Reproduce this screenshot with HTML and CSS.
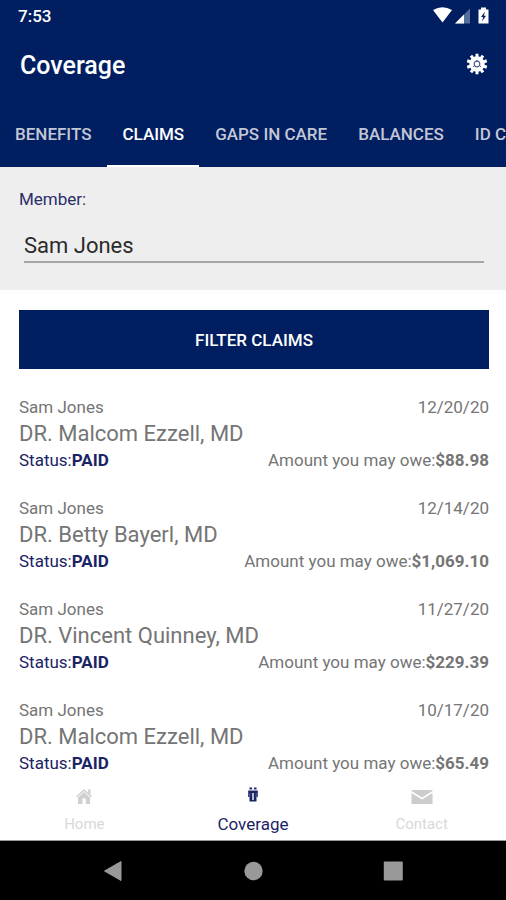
FILE: index.html
```html
<!DOCTYPE html>
<html lang="en">
<head>
<meta charset="utf-8">
<meta name="viewport" content="width=device-width, initial-scale=1">
<title>Coverage</title>
<link rel="stylesheet" href="styles.css">
</head>
<body>
<div class="app">
  <header class="top">
    <div class="status">
      <span>7:53</span>
      <svg class="status-icons" width="56" height="18" viewBox="0 0 56 18" aria-hidden="true">
        <path fill="#fff" d="M0 3Q9.500-2.500 19 3L9.500 15.500z"/>
        <path fill="#52709a" d="M22 16.500L37 1.500V16.500z"/>
        <path fill="#fff" d="M22 16.500L31 7.500V16.500z"/>
        <path fill="#fff" d="M45.500 2.500H48V0.500H53V2.500H55.500V16.500H45.500z"/>
        <path fill="#001e60" d="M52 4.500L48 10H50.200L49 14.500L53 8.700H50.800z"/>
      </svg>
    </div>
    <div class="bar">
      <h1>Coverage</h1>
      <button class="settings" type="button" aria-label="Settings">
        <svg width="22" height="22" viewBox="-11 -11 22 22" aria-hidden="true">
          <g stroke="#fff" stroke-width="3">
            <path d="M0-10.300V10.300M-6-8.300L6 8.300M-9.800-3.200L9.800 3.200M-9.800 3.200L9.800-3.200M-6 8.300L6-8.300"/>
          </g>
          <circle r="7.700" fill="#fff"/>
          <circle r="2.800" fill="none" stroke="#4b5b8c" stroke-width="1.200"/>
          <path d="M-4 3L-2 1M4 3L2 1M0-4V-2" stroke="#4b5b8c"/>
        </svg>
      </button>
    </div>
    <nav class="tabs" aria-label="Coverage sections">
      <a href="#benefits">BENEFITS</a>
      <a href="#claims" class="active" aria-current="page">CLAIMS</a>
      <a href="#gaps">GAPS IN CARE</a>
      <a href="#balances">BALANCES</a>
      <a href="#cards">ID CARDS</a>
    </nav>
  </header>

  <section class="member">
    <label for="member">Member:</label>
    <select id="member"><option>Sam Jones</option></select>
  </section>

  <main class="claims">
    <button class="filter" type="button">FILTER CLAIMS</button>
    <article class="claim">
      <div class="row"><span>Sam Jones</span><span>12/20/20</span></div>
      <h2>DR. Malcom Ezzell, MD</h2>
      <div class="row"><span class="paid">Status:<b>PAID</b></span><span>Amount you may owe:<b>$88.98</b></span></div>
    </article>
    <article class="claim">
      <div class="row"><span>Sam Jones</span><span>12/14/20</span></div>
      <h2>DR. Betty Bayerl, MD</h2>
      <div class="row"><span class="paid">Status:<b>PAID</b></span><span>Amount you may owe:<b>$1,069.10</b></span></div>
    </article>
    <article class="claim">
      <div class="row"><span>Sam Jones</span><span>11/27/20</span></div>
      <h2>DR. Vincent Quinney, MD</h2>
      <div class="row"><span class="paid">Status:<b>PAID</b></span><span>Amount you may owe:<b>$229.39</b></span></div>
    </article>
    <article class="claim">
      <div class="row"><span>Sam Jones</span><span>10/17/20</span></div>
      <h2>DR. Malcom Ezzell, MD</h2>
      <div class="row"><span class="paid">Status:<b>PAID</b></span><span>Amount you may owe:<b>$65.49</b></span></div>
    </article>
  </main>

  <nav class="bottom" aria-label="Main">
    <a href="#home">
      <svg width="22" height="20" viewBox="0 0 22 20" aria-hidden="true">
        <path d="M3.500 11L11 4L18.500 11" fill="none" stroke="#d0d0d0" stroke-width="1.500"/>
        <path fill="#d0d0d0" d="M15 3.500H17.500V9L15 6.500zM5 11.500L11 6L17 11.500V18H12.800V12.500H9.500V18H5z"/>
      </svg>
      <span>Home</span>
    </a>
    <a href="#coverage" class="active" aria-current="page">
      <svg width="22" height="20" viewBox="0 0 22 20" aria-hidden="true">
        <path fill="#1a2364" d="M7.500 1.500H10V3.500H7.500zM12 1.500H14.500V3.500H12zM6.200 4.500H15.800V11H14.500V15.500H7.500V11H6.200z"/>
        <path fill="#b9bdd6" d="M10 7H12V14H10zM7.500 3.500H14.500V4.300H7.500z"/>
        <path stroke="#8d94bb" stroke-width=".6" d="M7.800 7V11M14.200 7V11"/>
      </svg>
      <span>Coverage</span>
    </a>
    <a href="#contact">
      <svg width="22" height="20" viewBox="0 0 22 20" aria-hidden="true">
        <path fill="#ccc" d="M0.500 4H21.500V5L11 11.500L0.500 5zM0.500 7L11 13.500L21.500 7V18H0.500z"/>
      </svg>
      <span>Contact</span>
    </a>
  </nav>

  <div class="system">
    <button type="button" aria-label="Back"><svg width="20" height="22" viewBox="0 0 20 22"><path fill="#999" stroke="#999" stroke-linejoin="round" d="M1.500 11L18 1.500V20.500z"/></svg></button>
    <button type="button" aria-label="Home screen"><svg width="20" height="20" viewBox="0 0 20 20"><circle cx="10.500" cy="10" r="9.200" fill="#999"/></svg></button>
    <button type="button" aria-label="Recent apps"><svg width="20" height="20" viewBox="0 0 20 20"><rect width="19" height="19" x=".8" y=".5" rx="1" fill="#999"/></svg></button>
  </div>
</div>
</body>
</html>
```
FILE: styles.css
```css
* { box-sizing: border-box; }
body {
  margin: 0;
  background: #fff;
  color: #757575;
  font: 17px/24px Roboto, "Liberation Sans", sans-serif;
}
h1, h2 { margin: 0; }
button { border: 0; padding: 0; font: inherit; }
a { color: inherit; text-decoration: none; }
svg { display: block; }

.app {
  display: flex;
  flex-direction: column;
  height: 100vh;
}

.top { background: #001e60; color: #fff; }
.status {
  display: flex;
  justify-content: space-between;
  align-items: center;
  height: 32px;
  padding: 0 17px 0 18px;
  font-weight: 500;
}
.bar {
  display: flex;
  justify-content: space-between;
  align-items: center;
  height: 68px;
  padding: 0 18px 4px 20px;
}
h1 { padding-top: 4px; font-size: 25px; font-weight: 500; line-height: 32px; }
.settings { background: none; }
.tabs {
  display: flex;
  gap: 1px;
  height: 67px;
  overflow: hidden;
  font-weight: 500;
  white-space: nowrap;
  color: #c3c7d5;
}
.tabs a {
  flex: none;
  padding: 22px 15px 0;
  border-bottom: 2px solid transparent;
}
.tabs .active { color: #fff; border-color: #fff; }

.member {
  display: flex;
  flex-direction: column;
  gap: 16px;
  padding: 20px 22px 27px 19px;
  background: #eee;
}
.member label { color: #2b2f69; }
.member select {
  appearance: none;
  height: 36px;
  margin-left: 5px;
  padding: 4px 0 0;
  border: 0;
  border-bottom: 2px solid #a5a5a5;
  border-radius: 0;
  background: none;
  color: #2b2b2b;
  font: 22px/30px Roboto, "Liberation Sans", sans-serif;
}

.claims {
  flex: 1;
  min-height: 0;
  overflow: hidden;
  padding: 20px 17px 0 19px;
}
.filter {
  display: block;
  width: 100%;
  height: 59px;
  margin-bottom: 26px;
  background: #001e60;
  color: #fff;
  font-weight: 500;
}
.claim { margin-bottom: 24px; }
.row { display: flex; justify-content: space-between; line-height: 24px; }
h2 { font-size: 22px; font-weight: 400; line-height: 29px; }
b { font-weight: 700; }
.paid { color: #1a2364; }

.bottom {
  display: grid;
  grid-template-columns: repeat(3, 1fr);
  height: 64px;
  padding-top: 9px;
  background: #fff;
  border-bottom: 1px solid #999;
  color: #d8d8d8;
  font-size: 15px;
}
.bottom a {
  display: flex;
  flex-direction: column;
  align-items: center;
  gap: 7px;
  line-height: 22px;
}
.bottom .active { color: #1a2364; font-size: 17px; }

.system {
  display: flex;
  justify-content: center;
  align-items: center;
  gap: 120px;
  height: 59px;
  background: #000;
}
.system button { background: none; }
```
